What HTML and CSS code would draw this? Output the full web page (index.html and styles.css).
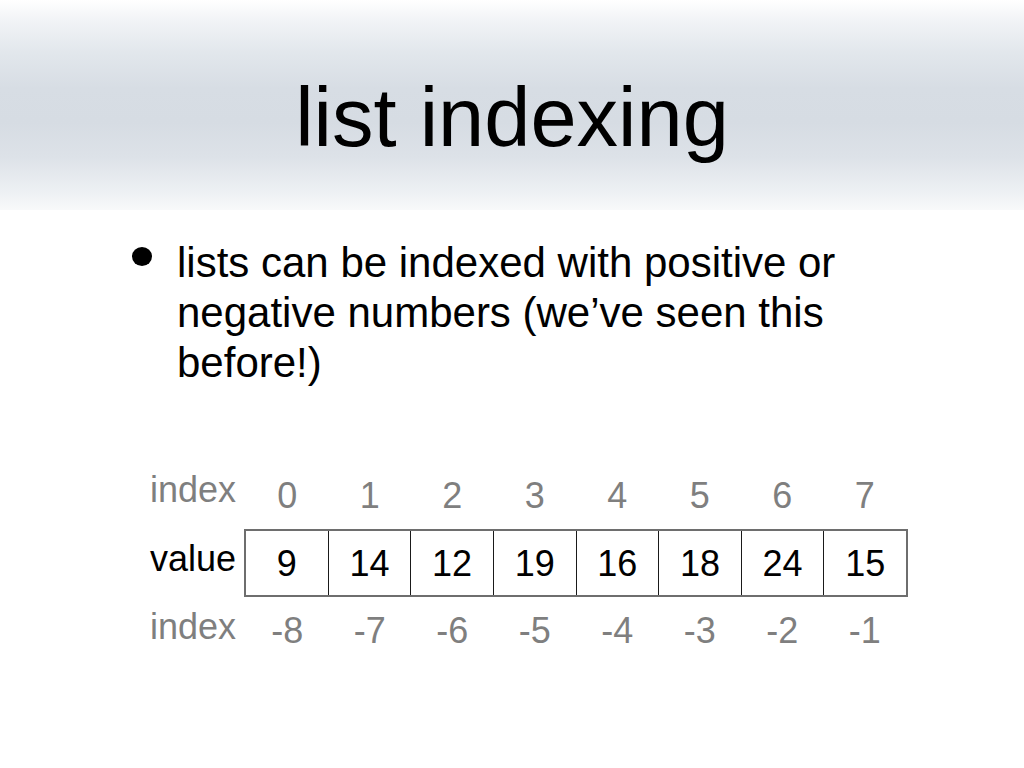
FILE: index.html
```html
<!DOCTYPE html>
<html lang="en">
<head>
<meta charset="utf-8">
<title>list indexing</title>
<link rel="stylesheet" href="styles.css">
</head>
<body>
<div class="slide">
  <header class="title-bar">
    <h1 class="title">list indexing</h1>
  </header>
  <main class="content">
    <ul class="bullets">
      <li class="bullet">
        <span class="dot"></span>
        <span class="bullet-text">lists can be indexed with positive or negative numbers (we’ve seen this before!)</span>
      </li>
    </ul>
    <div class="table">
      <div class="row row-top">
        <span class="label grey">index</span>
        <div class="cells grey">
          <span class="cell">0</span><span class="cell">1</span><span class="cell">2</span><span class="cell">3</span><span class="cell">4</span><span class="cell">5</span><span class="cell">6</span><span class="cell">7</span>
        </div>
      </div>
      <div class="row row-value">
        <span class="label">value</span>
        <div class="cells boxed">
          <span class="cell">9</span><span class="cell">14</span><span class="cell">12</span><span class="cell">19</span><span class="cell">16</span><span class="cell">18</span><span class="cell">24</span><span class="cell">15</span>
        </div>
      </div>
      <div class="row row-bottom">
        <span class="label grey">index</span>
        <div class="cells grey">
          <span class="cell">-8</span><span class="cell">-7</span><span class="cell">-6</span><span class="cell">-5</span><span class="cell">-4</span><span class="cell">-3</span><span class="cell">-2</span><span class="cell">-1</span>
        </div>
      </div>
    </div>
  </main>
</div>
</body>
</html>
```
FILE: styles.css
```css
html, body {
  margin: 0;
  padding: 0;
  background: #ffffff;
}

body {
  font-family: "Liberation Sans", Arial, sans-serif;
  color: #000000;
}

.slide {
  width: 1024px;
  height: 768px;
  overflow: hidden;
  background: #ffffff;
}

.title-bar {
  box-sizing: border-box;
  height: 210px;
  padding-top: 76px;
  background: linear-gradient(to bottom,
    #ffffff 0%,
    #f1f3f6 10%,
    #e2e7ec 25%,
    #d7dde4 42%,
    #d6dce3 58%,
    #dde2e8 75%,
    #eef1f4 92%,
    #f8f9fa 100%);
}

.title {
  margin: 0;
  font-size: 83px;
  line-height: 83px;
  font-weight: normal;
  text-align: center;
}

.content {
  display: flex;
  flex-direction: column;
}

.bullets {
  list-style: none;
  margin: 28px 0 0 132px;
  padding: 0;
}

.bullet {
  display: flex;
  align-items: flex-start;
}

.dot {
  flex: none;
  width: 20px;
  height: 19px;
  margin-top: 9px;
  margin-right: 25px;
  border-radius: 50%;
  background: #000000;
}

.bullet-text {
  width: 700px;
  font-size: 42px;
  line-height: 50px;
}

.table {
  margin: 82px 0 0 150px;
  display: flex;
  flex-direction: column;
  font-size: 36px;
  line-height: 40px;
}

.row {
  display: flex;
  align-items: flex-start;
}

.label {
  flex: none;
  width: 94px;
}

.grey {
  color: #7f7f7f;
}

.cells {
  box-sizing: border-box;
  display: flex;
  width: 664px;
  padding: 0 2px;
}

.cell {
  flex: 1;
  text-align: center;
}

.row-top {
  height: 59px;
}

.row-top .cells {
  padding-top: 6px;
}

.row-value .label {
  padding-top: 10px;
}

.cells.boxed {
  height: 68px;
  padding: 0;
  border: 2px solid #6e6e6e;
}

.boxed .cell {
  padding-top: 13px;
}

.boxed .cell + .cell {
  border-left: 1px solid #1a1a1a;
}

.row-bottom .label {
  padding-top: 10px;
}

.row-bottom .cells {
  padding-top: 14px;
}
```
